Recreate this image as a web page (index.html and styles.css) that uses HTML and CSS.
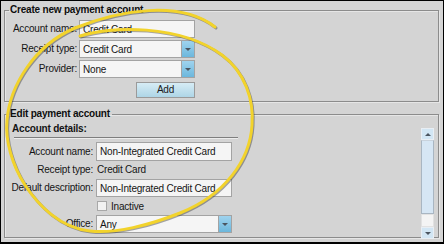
FILE: index.html
```html
<!DOCTYPE html>
<html>
<head>
<meta charset="utf-8">
<link rel="stylesheet" href="styles.css">
</head>
<body>
<div class="frame">
  <fieldset class="group group-create">
    <legend class="legend">Create new payment account</legend>
    <div class="form form-create">
      <label class="lbl">Account name:</label>
      <div class="field"><span class="val">Credit Card</span></div>
      <label class="lbl">Receipt type:</label>
      <div class="field select"><span class="val">Credit Card</span><span class="drop"><i class="tri"></i></span></div>
      <label class="lbl">Provider:</label>
      <div class="field select"><span class="val">None</span><span class="drop"><i class="tri"></i></span></div>
      <span></span>
      <div class="btn-row"><button class="btn">Add</button></div>
    </div>
  </fieldset>
  <fieldset class="group group-edit">
    <legend class="legend">Edit payment account</legend>
    <div class="edit-body">
      <div class="details">
        <div class="subhead">Account details:</div>
        <div class="rule"></div>
        <div class="form form-edit">
          <label class="lbl">Account name:</label>
          <div class="field"><span class="val">Non-Integrated Credit Card</span></div>
          <label class="lbl">Receipt type:</label>
          <div class="plain">Credit Card</div>
          <label class="lbl">Default description:</label>
          <div class="field"><span class="val">Non-Integrated Credit Card</span></div>
          <span></span>
          <div class="check-row"><span class="checkbox"></span><span class="check-label">Inactive</span></div>
          <label class="lbl">Office:</label>
          <div class="field select"><span class="val">Any</span><span class="drop"><i class="tri"></i></span></div>
        </div>
      </div>
      <div class="scrollbar">
        <div class="sb-btn"><i class="tri-up"></i></div>
        <div class="sb-track"></div>
        <div class="sb-thumb"></div>
        <div class="sb-btn"><i class="tri"></i></div>
      </div>
    </div>
  </fieldset>
  <svg class="annot" width="444" height="244" viewBox="0 0 444 244">
    <path d="M80,36 C110,26 180,24 222,55 C245,72 254,100 252,125 C250,160 225,195 180,213 C150,225 115,234 90,231 C60,228 38,205 25,185 C12,165 5,140 7,120 C10,85 35,45 75,28 C120,10 180,0 215,27" />
  </svg>
</div>
</body>
</html>
```
FILE: styles.css
```css
html, body {
  margin: 0;
  padding: 0;
  width: 444px;
  height: 244px;
  overflow: hidden;
}
body {
  font-family: "Liberation Sans", Arial, sans-serif;
  font-size: 10px;
  letter-spacing: -0.2px;
  color: #141414;
}
.frame {
  position: relative;
  box-sizing: border-box;
  width: 444px;
  height: 244px;
  background: #d4d4d4;
  border: 1px solid #000;
  border-bottom-width: 2px;
  padding: 2px 4px 0 3px;
}
.group {
  margin: 0;
  padding: 0;
  border: 1px solid #8c8c8c;
  box-shadow: inset 1px 1px 0 #e6e6e6, 1px 1px 0 #e6e6e6;
  min-width: 0;
}
.legend {
  margin-left: 4px;
  padding: 0 2px 0 1px;
  font-weight: bold;
  height: 14px;
  line-height: 14px;
  color: #0e0e0e;
}
.group-create {
  height: 99px;
  box-sizing: border-box;
}
.form {
  display: grid;
  align-items: center;
}
.form-create {
  grid-template-columns: 72px 116px;
  column-gap: 2px;
  row-gap: 2px;
  padding-top: 3px;
  grid-auto-rows: 18px;
}
.lbl {
  text-align: right;
  white-space: nowrap;
  line-height: 14px;
}
.field {
  box-sizing: border-box;
  height: 18px;
  background: #f5f5f5;
  border: 1px solid #a3a3a3;
  display: flex;
  align-items: center;
  white-space: nowrap;
  overflow: hidden;
}
.val {
  flex: 1;
  padding-left: 3px;
}
.drop {
  width: 12px;
  align-self: stretch;
  background: linear-gradient(#9fd3ee, #6cb7dc);
  border-left: 1px solid #a3a3a3;
  display: flex;
  align-items: center;
  justify-content: center;
}
.tri {
  width: 0;
  height: 0;
  border-left: 3px solid transparent;
  border-right: 3px solid transparent;
  border-top: 3px solid #4a5560;
}
.tri-up {
  width: 0;
  height: 0;
  border-left: 3px solid transparent;
  border-right: 3px solid transparent;
  border-bottom: 3px solid #4a5560;
}
.btn-row {
  display: flex;
  justify-content: flex-end;
  align-self: end;
}
.btn {
  box-sizing: border-box;
  width: 59px;
  height: 16px;
  padding: 0;
  font: inherit;
  letter-spacing: inherit;
  color: #1a1a1a;
  border: 1px solid #9a9a9a;
  background: linear-gradient(#d6ecf5, #aed5e6);
  line-height: 14px;
}
.group-edit {
  margin-top: 5px;
  height: 131px;
  box-sizing: border-box;
}
.edit-body {
  display: flex;
  justify-content: space-between;
  padding: 0 4px 0 7px;
}
.details {
  width: 226px;
}
.subhead {
  font-weight: bold;
  line-height: 13px;
  height: 13px;
  padding-top: 1px;
}
.rule {
  margin: 2px 0 3px 2px;
  border-top: 1px solid #7e7e7e;
  border-bottom: 1px solid #ececec;
}
.form-edit {
  grid-template-columns: 82px 136px;
  column-gap: 3px;
  row-gap: 2px;
  margin-left: -1px;
  grid-template-rows: 19px 14px 18px 14px 18px;
}
.form-edit .field {
  height: 100%;
}
.plain {
  padding-left: 1px;
  line-height: 14px;
}
.check-row {
  display: flex;
  align-items: center;
  gap: 4px;
  padding-left: 1px;
}
.checkbox {
  box-sizing: border-box;
  width: 10px;
  height: 10px;
  border: 1px solid #a8a8a8;
  background: #f2f2f2;
}
.scrollbar {
  margin-top: 7px;
  width: 13px;
  height: 111px;
  display: flex;
  flex-direction: column;
}
.sb-btn {
  box-sizing: border-box;
  height: 12px;
  background: #d2e6f4;
  border: 1px solid #e8eef4;
  display: flex;
  align-items: center;
  justify-content: center;
}
.sb-track {
  flex: 1;
  box-sizing: border-box;
  background: #d6e6f4;
  border: 1px solid #a9b6c2;
  border-top-color: #c8d2dc;
}
.sb-thumb {
  height: 13px;
  background: #f4f4f4;
  border: 1px solid #e2e2e2;
  box-sizing: border-box;
}
.annot {
  position: absolute;
  left: -1px;
  top: -1px;
  pointer-events: none;
  filter: drop-shadow(1px 1px 0.6px rgba(60, 60, 60, 0.45));
}
.annot path {
  fill: none;
  stroke: #f2d32c;
  stroke-width: 3;
  stroke-linecap: round;
}
```
